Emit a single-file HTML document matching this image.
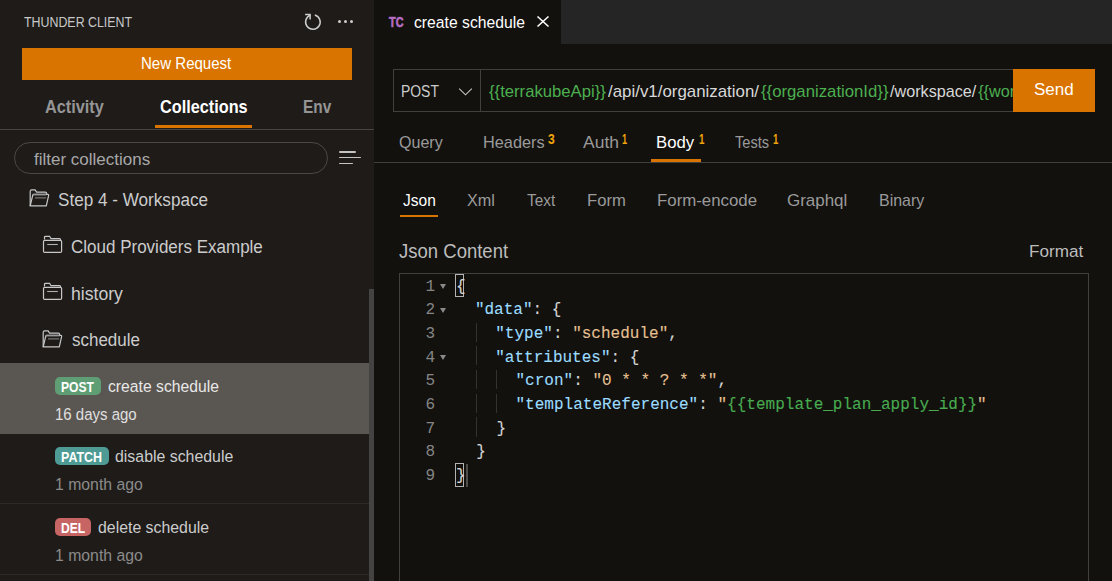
<!DOCTYPE html>
<html><head><meta charset="utf-8"><style>
*{box-sizing:border-box;margin:0;padding:0}
html,body{width:1112px;height:581px;overflow:hidden;background:#12110e;font-family:"Liberation Sans",sans-serif}
.abs{position:absolute}
.tx{position:absolute;white-space:pre;line-height:1;font-family:"Liberation Sans",sans-serif;transform-origin:0 0}
.cl{position:absolute;white-space:pre;font-family:"Liberation Mono",monospace;font-size:16px;letter-spacing:0.015px;-webkit-text-stroke:0.1px currentColor;line-height:1;color:#d4d4d4}
.ln{position:absolute;left:400px;width:35px;text-align:right;white-space:pre;font-family:"Liberation Mono",monospace;font-size:16px;line-height:1;color:#858585}
.fold{position:absolute;left:440px;width:0;height:0;border-left:3.5px solid transparent;border-right:3.5px solid transparent;border-top:5px solid #8a8a8a}
.guide{position:absolute;width:1px;background:#34322f}
</style></head><body>
<!-- sidebar -->
<div class="abs" style="left:0;top:0;width:374px;height:581px;background:#1e1b19"></div>
<!-- refresh icon -->
<svg class="abs" style="left:300px;top:10px" width="26" height="24" viewBox="0 0 26 24">
 <path d="M14.8 4.95 A7.3 7.3 0 1 1 10.4 5.14" fill="none" stroke="#cccccc" stroke-width="1.5"/>
 <path d="M5.1 4.4 H10.1 V9.4" fill="none" stroke="#cccccc" stroke-width="1.5"/>
</svg>
<div class="abs" style="left:337.6px;top:20px;width:3px;height:3px;border-radius:50%;background:#cccccc"></div>
<div class="abs" style="left:343.9px;top:20px;width:3px;height:3px;border-radius:50%;background:#cccccc"></div>
<div class="abs" style="left:350.2px;top:20px;width:3px;height:3px;border-radius:50%;background:#cccccc"></div>
<!-- new request button -->
<div class="abs" style="left:22px;top:48px;width:330px;height:32px;background:#d97400"></div>
<!-- tab underline + separator -->
<div class="abs" style="left:155px;top:125px;width:97px;height:3px;background:#d97400"></div>
<div class="abs" style="left:0;top:129px;width:374px;height:1px;background:#484543"></div>
<!-- filter -->
<div class="abs" style="left:14px;top:142px;width:314px;height:32px;border:1px solid #4a4745;border-radius:16px"></div>
<div class="abs" style="left:339px;top:151.3px;width:17px;height:1.4px;border-radius:1px;background:#c4c4c4"></div>
<div class="abs" style="left:339px;top:157px;width:21.8px;height:1.4px;border-radius:1px;background:#c4c4c4"></div>
<div class="abs" style="left:339px;top:162.8px;width:14px;height:1.4px;border-radius:1px;background:#c4c4c4"></div>
<!-- folder icons -->
<svg class="abs" style="left:29.4px;top:189px" width="24" height="20" viewBox="0 0 24 20">
 <path d="M1.2 16.9 V2.5 Q1.2 0.9 2.6 0.9 H6.1 L7.6 3.2 H16.2 Q17.7 3.2 17.7 4.7 V5.3" fill="none" stroke="#c8c8c8" stroke-width="1.2"/>
 <path d="M1.2 16.9 L3.7 6.3 Q3.9 5.3 5 5.3 H18.6 Q19.9 5.3 19.6 6.6 L17.3 16.9 Z" fill="none" stroke="#c8c8c8" stroke-width="1.2" stroke-linejoin="round"/>
 <path d="M3.7 5.6 H17.5" stroke="#9a9a9a" stroke-width="1.6"/>
 <path d="M6 8.9 H17.2" stroke="#8a8a8a" stroke-width="1"/>
</svg><svg class="abs" style="left:42px;top:235px" width="22" height="20" viewBox="0 0 22 20">
 <path d="M2.5 4.4 V2.2 Q2.5 1.3 3.5 1.3 H7.6 L9 3.7 H17.5 Q18.6 3.7 18.6 5" fill="none" stroke="#c8c8c8" stroke-width="1.2"/>
 <rect x="1.5" y="5.4" width="18.1" height="12" rx="1.2" fill="none" stroke="#c8c8c8" stroke-width="1.2"/>
 <path d="M5.2 9.5 H15.8" stroke="#b0b0b0" stroke-width="1.1"/>
</svg><svg class="abs" style="left:42px;top:282px" width="22" height="20" viewBox="0 0 22 20">
 <path d="M2.5 4.4 V2.2 Q2.5 1.3 3.5 1.3 H7.6 L9 3.7 H17.5 Q18.6 3.7 18.6 5" fill="none" stroke="#c8c8c8" stroke-width="1.2"/>
 <rect x="1.5" y="5.4" width="18.1" height="12" rx="1.2" fill="none" stroke="#c8c8c8" stroke-width="1.2"/>
 <path d="M5.2 9.5 H15.8" stroke="#b0b0b0" stroke-width="1.1"/>
</svg><svg class="abs" style="left:42.4px;top:329.8px" width="24" height="20" viewBox="0 0 24 20">
 <path d="M1.2 16.9 V2.5 Q1.2 0.9 2.6 0.9 H6.1 L7.6 3.2 H16.2 Q17.7 3.2 17.7 4.7 V5.3" fill="none" stroke="#c8c8c8" stroke-width="1.2"/>
 <path d="M1.2 16.9 L3.7 6.3 Q3.9 5.3 5 5.3 H18.6 Q19.9 5.3 19.6 6.6 L17.3 16.9 Z" fill="none" stroke="#c8c8c8" stroke-width="1.2" stroke-linejoin="round"/>
 <path d="M3.7 5.6 H17.5" stroke="#9a9a9a" stroke-width="1.6"/>
 <path d="M6 8.9 H17.2" stroke="#8a8a8a" stroke-width="1"/>
</svg>




<!-- selected row -->
<div class="abs" style="left:0;top:363px;width:369px;height:71px;background:#5a5651"></div>
<div class="abs" style="left:0;top:503px;width:369px;height:1px;background:#2c2927"></div>
<div class="abs" style="left:0;top:574px;width:369px;height:1px;background:#2c2927"></div>
<!-- badges -->
<div class="abs" style="left:55px;top:377px;width:46px;height:18px;border-radius:5px;background:#5f9e74"></div>
<div class="abs" style="left:55px;top:447px;width:54px;height:18px;border-radius:5px;background:#4e9a94"></div>
<div class="abs" style="left:55px;top:518px;width:36px;height:18px;border-radius:5px;background:#c76565"></div>
<!-- scrollbar -->
<div class="abs" style="left:369px;top:289px;width:5px;height:292px;background:#444341"></div>

<!-- editor tab bar -->
<div class="abs" style="left:374px;top:0;width:738px;height:44px;background:#252525"></div>
<div class="abs" style="left:374px;top:0;width:187px;height:44px;background:#12110e"></div>
<div class="tx" style="left:389.2px;top:14.6px;font-size:14.6px;font-weight:700;color:#b36cc0;-webkit-text-stroke:0.7px #b36cc0;letter-spacing:0.3px;transform:scaleX(0.74);transform-origin:0 0">TC</div>
<svg class="abs" style="left:536px;top:15.3px" width="14" height="13" viewBox="0 0 14 13">
 <path d="M1.5 1.5 L12.5 11.5 M12.5 1.5 L1.5 11.5" stroke="#ffffff" stroke-width="1.6"/>
</svg>
<!-- url bar -->
<div class="abs" style="left:393px;top:69px;width:621px;height:43px;border:1px solid #42403c"></div>
<div class="abs" style="left:480px;top:69px;width:1px;height:43px;background:#42403c"></div>
<svg class="abs" style="left:457px;top:85.6px" width="17" height="11" viewBox="0 0 17 11">
 <path d="M2.2 2.6 L8.5 8.8 L14.8 2.6" fill="none" stroke="#c4c4c4" stroke-width="1.15"/>
</svg>

<div class="abs" style="left:1013px;top:69px;width:82px;height:43px;background:#d97400"></div>
<!-- request tabs underline + line -->
<div class="abs" style="left:651px;top:159px;width:50px;height:3px;background:#d97400"></div>
<div class="abs" style="left:374px;top:162px;width:738px;height:1px;background:#42403c"></div>
<!-- json underline -->
<div class="abs" style="left:400px;top:215px;width:38px;height:2px;background:#d97400"></div>
<!-- code editor box -->
<div class="abs" style="left:399px;top:273px;width:690px;height:320px;border:1px solid #42403c"></div>
<div class="guide" style="left:476px;top:322.50px;height:19.3px"></div><div class="guide" style="left:476px;top:346.20px;height:19.3px"></div><div class="guide" style="left:476px;top:369.90px;height:19.3px"></div><div class="guide" style="left:476px;top:393.60px;height:19.3px"></div><div class="guide" style="left:476px;top:417.30px;height:19.3px"></div><div class="guide" style="left:496px;top:369.90px;height:19.3px"></div><div class="guide" style="left:496px;top:393.60px;height:19.3px"></div>
<div class="fold" style="top:284.30px"></div><div class="fold" style="top:308.00px"></div><div class="fold" style="top:355.40px"></div>
<div class="abs" style="left:455px;top:274px;width:9px;height:23px;border:1px solid #b4b4b4"></div>
<div class="abs" style="left:455px;top:463px;width:9px;height:24px;border:1px solid #b4b4b4"></div>
<div class="abs" style="left:466px;top:464px;width:2px;height:23px;background:#4e4d4b"></div>
<div class="cl" style="left:456.1px;top:278.54px">{</div><div class="ln" style="top:278.54px">1</div><div class="cl" style="left:474.9px;top:302.24px"><span style="color:#9cdcfe">"data"</span>: {</div><div class="ln" style="top:302.24px">2</div><div class="cl" style="left:495.2px;top:325.94px"><span style="color:#9cdcfe">"type"</span>: <span style="color:#e6c092">"schedule"</span>,</div><div class="ln" style="top:325.94px">3</div><div class="cl" style="left:495.2px;top:349.64px"><span style="color:#9cdcfe">"attributes"</span>: {</div><div class="ln" style="top:349.64px">4</div><div class="cl" style="left:515.5px;top:373.34px"><span style="color:#9cdcfe">"cron"</span>: <span style="color:#e6c092">"0 * * ? * *"</span>,</div><div class="ln" style="top:373.34px">5</div><div class="cl" style="left:515.5px;top:397.04px"><span style="color:#9cdcfe">"templateReference"</span>: <span style="color:#e6c092">"</span><span style="color:#48ab50">{{template_plan_apply_id}}</span><span style="color:#e6c092">"</span></div><div class="ln" style="top:397.04px">6</div><div class="cl" style="left:496.6px;top:420.74px">}</div><div class="ln" style="top:420.74px">7</div><div class="cl" style="left:476.2px;top:444.44px">}</div><div class="ln" style="top:444.44px">8</div><div class="cl" style="left:456.1px;top:468.14px">}</div><div class="ln" style="top:468.14px">9</div>
<div class="tx" id="t_title" style="left:24.00px;top:15.00px;font-size:14px;font-weight:400;color:#c8c8c8;transform:scaleX(0.8852)">THUNDER CLIENT</div>
<div class="tx" id="t_newreq" style="left:140.95px;top:56.00px;font-size:15.8px;font-weight:400;color:#ffffff;transform:scaleX(0.9521)">New Request</div>
<div class="tx" id="t_act" style="left:45.00px;top:98.00px;font-size:18.5px;font-weight:700;color:#959595;transform:scaleX(0.8806)">Activity</div>
<div class="tx" id="t_col" style="left:160.00px;top:98.00px;font-size:18.5px;font-weight:700;color:#ffffff;transform:scaleX(0.8788)">Collections</div>
<div class="tx" id="t_env" style="left:302.67px;top:98.00px;font-size:18.5px;font-weight:700;color:#959595;transform:scaleX(0.8333)">Env</div>
<div class="tx" id="t_filter" style="left:34.00px;top:151.00px;font-size:17px;font-weight:400;color:#a8a8a8;transform:scaleX(1.0000)">filter collections</div>
<div class="tx" id="t_step4" style="left:58.31px;top:190.00px;font-size:19.2px;font-weight:400;color:#cccccc;transform:scaleX(0.8922)">Step 4 - Workspace</div>
<div class="tx" id="t_cloud" style="left:70.69px;top:238.00px;font-size:18.8px;font-weight:400;color:#cccccc;transform:scaleX(0.9052)">Cloud Providers Example</div>
<div class="tx" id="t_hist" style="left:70.66px;top:285.00px;font-size:18.8px;font-weight:400;color:#cccccc;transform:scaleX(0.9382)">history</div>
<div class="tx" id="t_sched" style="left:72.10px;top:331.00px;font-size:18.8px;font-weight:400;color:#cccccc;transform:scaleX(0.9040)">schedule</div>
<div class="tx" id="t_post" style="left:61.14px;top:380.00px;font-size:14px;font-weight:700;color:#ffffff;transform:scaleX(0.8649)">POST</div>
<div class="tx" id="t_cs" style="left:108.00px;top:378.00px;font-size:16.3px;font-weight:400;color:#e8e8e8;transform:scaleX(0.9652)">create schedule</div>
<div class="tx" id="t_16" style="left:54.88px;top:406.00px;font-size:16.3px;font-weight:400;color:#e0e0e0;transform:scaleX(0.9205)">16 days ago</div>
<div class="tx" id="t_patch" style="left:61.11px;top:450.00px;font-size:14px;font-weight:700;color:#ffffff;transform:scaleX(0.8889)">PATCH</div>
<div class="tx" id="t_ds" style="left:115.10px;top:448.00px;font-size:16.3px;font-weight:400;color:#cccccc;transform:scaleX(0.9752)">disable schedule</div>
<div class="tx" id="t_1m1" style="left:54.83px;top:476.00px;font-size:16.3px;font-weight:400;color:#8b8b8b;transform:scaleX(0.9697)">1 month ago</div>
<div class="tx" id="t_del" style="left:61.14px;top:521.00px;font-size:14px;font-weight:700;color:#ffffff;transform:scaleX(0.8630)">DEL</div>
<div class="tx" id="t_dls" style="left:98.10px;top:519.00px;font-size:16.3px;font-weight:400;color:#cccccc;transform:scaleX(0.9737)">delete schedule</div>
<div class="tx" id="t_1m2" style="left:54.83px;top:547.00px;font-size:16.3px;font-weight:400;color:#8b8b8b;transform:scaleX(0.9697)">1 month ago</div>
<div class="tx" id="t_tabname" style="left:414.00px;top:14.00px;font-size:16.3px;font-weight:400;color:#ffffff;transform:scaleX(0.9652)">create schedule</div>
<div class="tx" id="t_method" style="left:401.11px;top:84.00px;font-size:15.6px;font-weight:400;color:#cccccc;transform:scaleX(0.8929)">POST</div>
<div class="tx" id="t_send" style="left:1033.94px;top:82.00px;font-size:16px;font-weight:400;color:#ffffff;transform:scaleX(1.0611)">Send</div>
<div class="tx" id="t_query" style="left:399.40px;top:134.00px;font-size:17px;font-weight:400;color:#9a9a9a;transform:scaleX(0.9447)">Query</div>
<div class="tx" id="t_headers" style="left:482.54px;top:134.00px;font-size:17px;font-weight:400;color:#9a9a9a;transform:scaleX(0.9603)">Headers</div>
<div class="tx" id="t_auth" style="left:583.00px;top:134.00px;font-size:17px;font-weight:400;color:#9a9a9a;transform:scaleX(1.0294)">Auth</div>
<div class="tx" id="t_body" style="left:656.42px;top:134.00px;font-size:17px;font-weight:400;color:#ffffff;transform:scaleX(0.9842)">Body</div>
<div class="tx" id="t_tests" style="left:734.50px;top:134.00px;font-size:17px;font-weight:400;color:#9a9a9a;transform:scaleX(0.8600)">Tests</div>
<div class="tx" id="s_h" style="left:548.10px;top:132.00px;font-size:14.3px;font-weight:700;color:#f0a30a;transform:scaleX(0.8500)">3</div>
<div class="tx" id="s_a" style="left:622.36px;top:132.00px;font-size:14.3px;font-weight:700;color:#f0a30a;transform:scaleX(0.6429)">1</div>
<div class="tx" id="s_b" style="left:698.81px;top:132.00px;font-size:14.3px;font-weight:700;color:#f0a30a;transform:scaleX(0.6857)">1</div>
<div class="tx" id="s_t" style="left:773.33px;top:132.00px;font-size:14.3px;font-weight:700;color:#f0a30a;transform:scaleX(0.6714)">1</div>
<div class="tx" id="t_json" style="left:403.00px;top:192.00px;font-size:17px;font-weight:400;color:#ffffff;transform:scaleX(0.9143)">Json</div>
<div class="tx" id="t_xml" style="left:466.90px;top:192.00px;font-size:17px;font-weight:400;color:#9a9a9a;transform:scaleX(0.9517)">Xml</div>
<div class="tx" id="t_text" style="left:527.00px;top:192.00px;font-size:17px;font-weight:400;color:#9a9a9a;transform:scaleX(0.9062)">Text</div>
<div class="tx" id="t_form" style="left:586.82px;top:192.00px;font-size:17px;font-weight:400;color:#9a9a9a;transform:scaleX(0.9789)">Form</div>
<div class="tx" id="t_formenc" style="left:656.51px;top:192.00px;font-size:17px;font-weight:400;color:#9a9a9a;transform:scaleX(0.9900)">Form-encode</div>
<div class="tx" id="t_gql" style="left:787.40px;top:192.00px;font-size:17px;font-weight:400;color:#9a9a9a;transform:scaleX(0.9966)">Graphql</div>
<div class="tx" id="t_bin" style="left:878.56px;top:192.00px;font-size:17px;font-weight:400;color:#9a9a9a;transform:scaleX(0.9396)">Binary</div>
<div class="tx" id="t_jc" style="left:398.80px;top:242.00px;font-size:19.5px;font-weight:400;color:#bdbdbd;transform:scaleX(0.9496)">Json Content</div>
<div class="tx" id="t_fmt" style="left:1028.55px;top:243.00px;font-size:16.3px;font-weight:400;color:#bdbdbd;transform:scaleX(1.0510)">Format</div><div style="position:absolute;left:481px;top:0;width:532px;height:581px;overflow:hidden"><div style="position:absolute;left:-481px;top:0;width:1112px;height:581px"><div class="tx" id="u1" style="left:489.40px;top:83.00px;font-size:16.2px;font-weight:400;color:#4caf50;transform:scaleX(1.0298)">{{terrakubeApi}}</div><div class="tx" id="u2" style="left:608.10px;top:83.00px;font-size:16.2px;font-weight:400;color:#d8d8d8;transform:scaleX(1.0421)">/api/v1/organization/</div><div class="tx" id="u3" style="left:760.70px;top:83.00px;font-size:16.2px;font-weight:400;color:#4caf50;transform:scaleX(1.0339)">{{organizationId}}</div><div class="tx" id="u4" style="left:890.00px;top:83.00px;font-size:16.2px;font-weight:400;color:#d8d8d8;transform:scaleX(0.9989)">/workspace/</div><div class="tx" id="u5" style="left:978.20px;top:83.00px;font-size:16.2px;font-weight:400;color:#4caf50;transform:scaleX(1.0000)">{{workspaceId}}/schedule</div></div></div>
</body></html>
